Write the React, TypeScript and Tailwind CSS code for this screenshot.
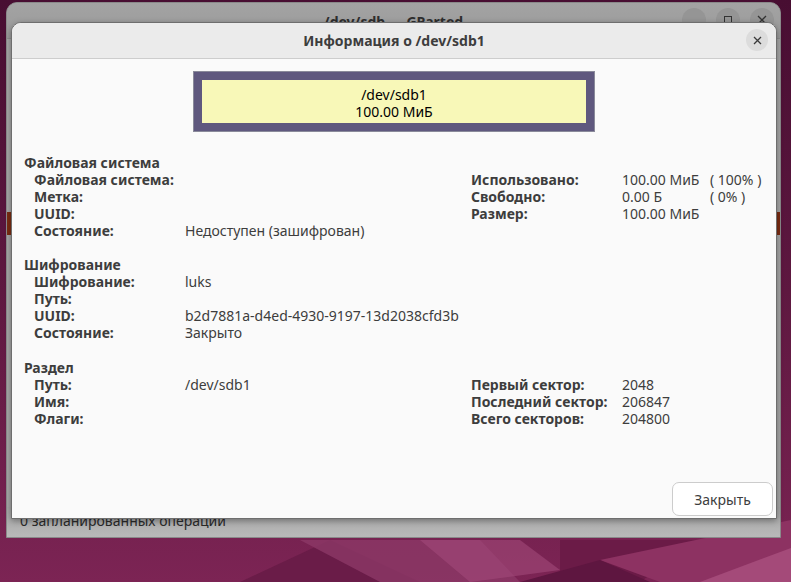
import React from "react";

const font = { fontFamily: '"Noto Sans", "DejaVu Sans", sans-serif' };

function Row({ label, value, extra }: { label: string; value?: string; extra?: string }) {
  return (
    <>
      <div className="font-bold whitespace-nowrap">{label}</div>
      <div className="whitespace-nowrap">{value ?? ""}</div>
      {extra !== undefined && <div className="whitespace-nowrap">{extra}</div>}
    </>
  );
}

export default function App() {
  return (
    <div
      className="relative w-[791px] h-[582px] overflow-hidden bg-gradient-to-b from-[#480e32] via-[#5e1840] to-[#7c2454]"
      style={font}
    >
      {/* wallpaper shapes */}
      <svg className="absolute inset-0" width="791" height="582" viewBox="0 0 791 582">
        <polygon points="240,582 330,540 420,582" fill="#6a1c48" />
        <polygon points="300,540 480,540 520,582 380,582" fill="#8c3866" opacity="0.8" />
        <polygon points="420,540 520,540 560,570 470,582" fill="#a14a7a" opacity="0.6" />
        <polygon points="560,540 700,540 640,582 560,582" fill="#6b1b47" />
        <polygon points="600,560 791,520 791,582 660,582" fill="#8d3262" />
        <polygon points="700,582 791,548 791,582" fill="#a44a79" />
        <polygon points="520,582 600,560 650,582" fill="#5e1640" />
      </svg>

      {/* parent GParted window (dimmed) */}
      <div className="absolute left-[6px] top-[2px] w-[775px] h-[536px] rounded-t-[11px] bg-[#a6a6a6] border border-[#8a8a8a] overflow-hidden">
        <div className="h-[36px] bg-gradient-to-b from-[#a3a3a3] to-[#9a9a9a] border-b border-[#8e8e8e] flex items-center justify-center relative">
          <span className="font-bold text-[14px] text-[#2e2e2e] mt-[2px]">/dev/sdb — GParted</span>
          <div className="absolute right-[74px] top-[5px] w-[24px] h-[24px] rounded-full bg-[#959595]" />
          <div className="absolute right-[40px] top-[5px] w-[24px] h-[24px] rounded-full bg-[#959595] flex items-center justify-center">
            <div className="w-[8px] h-[8px] border border-[#333]" />
          </div>
          <div className="absolute right-[6px] top-[5px] w-[24px] h-[24px] rounded-full bg-[#959595] flex items-center justify-center">
            <svg width="10" height="10" viewBox="0 0 10 10">
              <path d="M1 1L9 9M9 1L1 9" stroke="#333" strokeWidth="1.3" />
            </svg>
          </div>
        </div>
        <div className="absolute left-0 top-[209px] w-[5px] h-[23px] bg-[#7b2c12]" />
        <div className="absolute right-0 top-[209px] w-[5px] h-[23px] bg-[#7b2c12]" />
        <div className="absolute left-0 right-0 bottom-0 h-[30px] bg-gradient-to-b from-[#a4a4a4] to-[#b9b9b9] flex items-start">
          <span className="ml-[13px] mt-[5px] text-[14px] text-[#2a2a2a] leading-[17px]">0 запланированных операции</span>
        </div>
      </div>

      {/* dialog */}
      <div className="absolute left-[11px] top-[22px] w-[766px] h-[497px] rounded-t-[10px] border border-[#6e6e6e] bg-[#fafafa] overflow-hidden flex flex-col shadow-[0_2px_6px_rgba(0,0,0,0.35)] text-[#3d3d3d]">
        <div className="h-[36px] shrink-0 bg-[#ebebeb] border-b border-[#cdcdcd] flex items-center justify-center relative">
          <span className="font-bold text-[14px] text-[#3d3d3d]">Информация о /dev/sdb1</span>
          <div className="absolute right-[8px] top-[6px] w-[22px] h-[22px] rounded-full bg-[#dcdcdc] flex items-center justify-center">
            <svg width="9" height="9" viewBox="0 0 9 9">
              <path d="M1 1L8 8M8 1L1 8" stroke="#3a3a3a" strokeWidth="1.3" />
            </svg>
          </div>
        </div>

        <div className="flex-1 flex flex-col text-[14px] leading-[17px]">
          <div className="flex justify-center mt-[12px]">
            <div className="w-[402px] h-[61px] bg-[#5f587e] border border-[#8a8a9a] p-[8px]">
              <div className="w-full h-full bg-[#f8f8b8] flex flex-col items-center justify-center pt-[3px] text-black">
                <div>/dev/sdb1</div>
                <div>100.00 МиБ</div>
              </div>
            </div>
          </div>

          <div className="pl-[12px] mt-[22px]">
            <div className="font-bold">Файловая система</div>
            <div className="flex pl-[10px]">
              <div className="grid grid-cols-[151px_auto] w-[437px] content-start">
                <Row label="Файловая система:" />
                <Row label="Метка:" />
                <Row label="UUID:" />
                <Row label="Состояние:" value="Недоступен (зашифрован)" />
              </div>
              <div className="grid grid-cols-[151px_88px_auto] content-start">
                <Row label="Использовано:" value="100.00 МиБ" extra="( 100% )" />
                <Row label="Свободно:" value="0.00 Б" extra="( 0% )" />
                <Row label="Размер:" value="100.00 МиБ" extra="" />
              </div>
            </div>

            <div className="font-bold mt-[17px]">Шифрование</div>
            <div className="pl-[10px] grid grid-cols-[151px_auto]">
              <Row label="Шифрование:" value="luks" />
              <Row label="Путь:" />
              <Row label="UUID:" value="b2d7881a-d4ed-4930-9197-13d2038cfd3b" />
              <Row label="Состояние:" value="Закрыто" />
            </div>

            <div className="font-bold mt-[18px]">Раздел</div>
            <div className="flex pl-[10px]">
              <div className="grid grid-cols-[151px_auto] w-[437px] content-start">
                <Row label="Путь:" value="/dev/sdb1" />
                <Row label="Имя:" />
                <Row label="Флаги:" />
              </div>
              <div className="grid grid-cols-[151px_auto] content-start">
                <Row label="Первый сектор:" value="2048" />
                <Row label="Последний сектор:" value="206847" />
                <Row label="Всего секторов:" value="204800" />
              </div>
            </div>
          </div>

          <div className="flex-1" />
          <div className="flex justify-end pr-[3px] pb-[2px]">
            <button className="w-[101px] h-[34px] rounded-[7px] border border-[#cccccc] bg-white text-[14px] text-[#3d3d3d]">
              Закрыть
            </button>
          </div>
        </div>
      </div>
    </div>
  );
}
